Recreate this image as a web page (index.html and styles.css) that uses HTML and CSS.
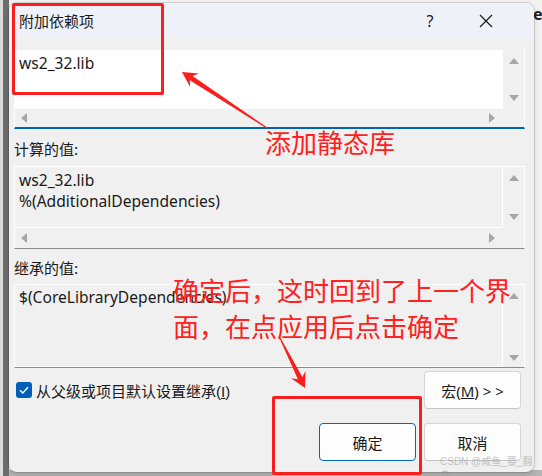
FILE: index.html
```html
<!DOCTYPE html>
<html lang="zh-CN">
<head>
    <meta charset="UTF-8">
    <title>附加依赖项</title>
    <link rel="stylesheet" href="styles.css">
</head>
<body>
    <div class="backdrop-text">er</div>

    <div class="dialog">
        <div class="titlebar">
            <span class="title">附加依赖项</span>
            <span class="caption-btn">?</span>
            <span class="caption-btn">
                <svg width="14" height="14" viewBox="0 0 14 14"><path d="M1 1L13 13M13 1L1 13" stroke="#1a1a1a" stroke-width="1.2"/></svg>
            </span>
        </div>

        <div class="content">
            <!-- caja editable -->
            <div class="editbox editbox-active">
                <div class="edit-text">ws2_32.lib</div>
                <div class="vscroll">
                    <span class="tri tri-up"></span>
                    <span class="tri tri-down"></span>
                </div>
                <div class="hscroll">
                    <span class="tri tri-left"></span>
                    <span class="tri tri-right"></span>
                </div>
                <div class="corner"></div>
            </div>

            <div class="label">计算的值:</div>
            <div class="editbox editbox-readonly">
                <div class="edit-text">ws2_32.lib<br>%(AdditionalDependencies)</div>
                <div class="vscroll">
                    <span class="tri tri-up"></span>
                    <span class="tri tri-down"></span>
                </div>
                <div class="hscroll">
                    <span class="tri tri-left"></span>
                    <span class="tri tri-right"></span>
                </div>
                <div class="corner"></div>
            </div>

            <div class="label label-second">继承的值:</div>
            <div class="editbox editbox-inherit">
                <div class="edit-text">$(CoreLibraryDependencies)</div>
                <div class="vscroll">
                    <span class="tri tri-up"></span>
                    <span class="tri tri-down"></span>
                </div>
            </div>

            <div class="footer">
                <div class="row">
                    <label class="check">
                        <span class="checkbox">
                            <svg width="12" height="12" viewBox="0 0 12 12"><path d="M2 6.3L4.8 9L10 3.2" fill="none" stroke="#fff" stroke-width="1.4"/></svg>
                        </span>
                        <span>从父级或项目默认设置继承<span class="latin">(<u>I</u>)</span></span>
                    </label>
                    <button class="btn">宏(<u>M</u>) &gt; &gt;</button>
                </div>
                <div class="row row-end">
                    <button class="btn btn-default">确定</button>
                    <button class="btn">取消</button>
                </div>
            </div>
        </div>
    </div>

    <!-- anotaciones -->
    <div class="mark mark-top"></div>
    <div class="mark mark-bottom"></div>
    <svg class="arrows" width="542" height="476" viewBox="0 0 542 476">
        <polygon fill="#fa1e1e" points="267.3,127.6 192.6,75.96 198.9,73.57 182,72 190.1,86.93 189.8,80.14 266.7,128.4"/>
        <polygon fill="#fa1e1e" points="279.5,338.2 297.9,379.3 291.1,378.2 305,388 305.5,371 302.3,377.1 280.5,337.8"/>
    </svg>
    <div class="note note-top">添加静态库</div>
    <div class="note note-bottom">确定后，这时回到了上一个界<br>面，在点应用后点击确定</div>
    <div class="watermark">CSDN @咸鱼_要_翻身</div>
</body>
</html>
```

FILE: styles.css
```css
body {
    margin: 0;
    width: 542px;
    height: 476px;
    overflow: hidden;
    position: relative;
    font-family: 'Noto Sans', 'Noto Sans CJK SC', sans-serif;
    font-size: 15px;
    color: #1a1a1a;
    background:
        linear-gradient(to right, #dcdcdc 0 3px, #6e6e6e 3px 9px, transparent 9px),
        linear-gradient(to bottom, #f3f3f3 0 470px, #b4b4b4 470px);
    padding: 3px 0 0 9px;
    box-sizing: border-box;
}
.backdrop-text {
    position: absolute;
    left: 533px;
    top: 3px;
    font-weight: bold;
    font-size: 16px;
    color: #222;
}
.dialog {
    position: relative;
    width: 525px;
    height: 469px;
    border-radius: 8px;
    overflow: hidden;
    background: #f0f0f0;
    box-shadow: 0 0 0 1px rgba(0,0,0,0.12), 0 2px 6px rgba(0,0,0,0.15);
    display: flex;
    flex-direction: column;
}
.titlebar {
    height: 35px;
    background: #eff1f8;
    display: flex;
    align-items: center;
    padding: 0 20px 0 10px;
}
.title {
    font-family: 'Noto Sans CJK SC', sans-serif;
    font-size: 15px;
    flex: 1;
}
.caption-btn {
    width: 56px;
    display: flex;
    justify-content: center;
    align-items: center;
    font-size: 16px;
}
.content {
    flex: 1;
    padding: 11px 9px 10px 5px;
    display: flex;
    flex-direction: column;
}
.editbox {
    display: grid;
    grid-template-columns: 1fr 21px;
    border: 1px solid #fff;
}
.editbox-active {
    grid-template-rows: 59px 18px;
    border-bottom: 2px solid #0063b1;
    border-top-color: #f0f0f0;
}
.editbox-active .edit-text {
    background: #fff;
}
.editbox-readonly {
    grid-template-rows: 61px 20px;
    border-bottom: 1px solid #8a8a8a;
}
.editbox-inherit {
    grid-template-rows: 82px;
    border-bottom: 1px solid #8a8a8a;
}
.editbox-readonly .edit-text, .editbox-inherit .edit-text {
    border-right: 1px solid #fff;
    border-bottom: 1px solid #fff;
}
.editbox-inherit .edit-text {
    padding-top: 2px;
}
.edit-text {
    padding: 3px 4px;
    font-size: 15.6px;
    line-height: 21px;
}
.vscroll {
    display: flex;
    flex-direction: column;
    justify-content: space-between;
    align-items: center;
    padding: 8px 0 8px 1px;
}
.editbox-inherit .vscroll {
    padding: 8px 0 6px 1px;
}
.hscroll {
    display: flex;
    justify-content: space-between;
    align-items: center;
    padding: 0 8px 0 6px;
}
.tri {
    width: 0;
    height: 0;
    border: 5px solid transparent;
}
.tri-up {
    border-bottom: 6px solid #a6a6a6;
    border-top-width: 0;
}
.tri-down {
    border-top: 6px solid #a6a6a6;
    border-bottom-width: 0;
}
.tri-left {
    border-right: 6px solid #a6a6a6;
    border-left-width: 0;
}
.tri-right {
    border-left: 6px solid #a6a6a6;
    border-right-width: 0;
}
.label {
    font-family: 'Noto Sans CJK SC', sans-serif;
    line-height: 20px;
    margin: 10px 0 7px;
}
.label-second {
    margin: 9px 0 6px;
}
.footer {
    padding: 0 4px 0 2px;
    display: flex;
    flex-direction: column;
}
.row {
    display: flex;
    align-items: center;
    justify-content: space-between;
    margin-top: 3px;
}
.row-end {
    justify-content: flex-end;
    gap: 8px;
    margin-top: 14px;
}
.check {
    display: flex;
    align-items: center;
    gap: 4px;
}
.latin {
    font-family: 'Liberation Sans', sans-serif;
    font-size: 15px;
}
.checkbox {
    width: 16px;
    height: 16px;
    border-radius: 3px;
    background: #005fb8;
    display: flex;
    align-items: center;
    justify-content: center;
}
.btn {
    width: 97px;
    height: 38px;
    background: #fdfdfd;
    border: 1px solid #d5d5d5;
    border-bottom-color: #c4c4c4;
    border-radius: 4px;
    font-family: 'Noto Sans', 'Noto Sans CJK SC', sans-serif;
    font-size: 15px;
    color: #1a1a1a;
    padding: 0;
}
.btn-default {
    border-color: #0067c0;
}
.mark {
    position: absolute;
    border: 3px solid #fa1e1e;
    border-radius: 2px;
}
.mark-top {
    left: 12px;
    top: 3px;
    width: 146px;
    height: 86px;
}
.mark-bottom {
    left: 272px;
    top: 396px;
    width: 144px;
    height: 73px;
}
.arrows {
    position: absolute;
    left: 0;
    top: 0;
}
.note {
    position: absolute;
    color: #ff2020;
    font-family: 'Noto Sans CJK SC', sans-serif;
    font-size: 26px;
    line-height: 36px;
}
.note-top {
    left: 265px;
    top: 124px;
}
.note-bottom {
    left: 173px;
    top: 272px;
}
.watermark {
    position: absolute;
    left: 440px;
    top: 455px;
    line-height: 14px;
    font-family: 'Liberation Sans', 'Noto Sans CJK SC', sans-serif;
    font-size: 10px;
    color: rgba(150,150,150,0.55);
}
```
